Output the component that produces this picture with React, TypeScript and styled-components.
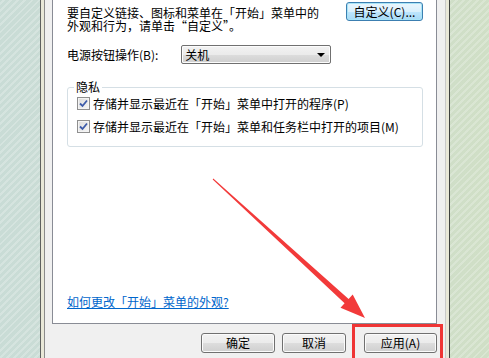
import styled, { createGlobalStyle } from "styled-components";

const GlobalStyle = createGlobalStyle`
  html, body {
    margin: 0;
    padding: 0;
  }
  body {
    width: 489px;
    height: 358px;
    overflow: hidden;
    font-family: "Noto Sans CJK SC", "DejaVu Sans", sans-serif;
    font-size: 12px;
    color: #000;
    background:
      repeating-linear-gradient(-45deg, rgba(255, 255, 255, 0.22) 0 2px, rgba(255, 255, 255, 0) 2px 5px),
      linear-gradient(90deg, #c9dcd6 0%, #cddcd2 50%, #d0dfc6 100%);
  }
`;

const Page = styled.div`
  position: relative;
  height: 358px;
  display: flex;
`;

const Window = styled.div`
  margin-left: 40px;
  width: 410px;
  box-sizing: border-box;
  border-left: 1px solid #5f6160;
  border-right: 1px solid #3f4140;
  padding: 0 4px 0 3px;
  background: #e9e8d8;
  display: flex;
`;

const Dialog = styled.div`
  flex: 1;
  border-left: 1px solid #8b8b8b;
  border-right: 1px solid #c9c9c9;
  background: #f0f0f0;
  padding: 0 8px 0 7px;
  display: flex;
  flex-direction: column;
`;

const TabPanel = styled.div`
  height: 324px;
  box-sizing: border-box;
  background: #fff;
  border: 1px solid #898c95;
  border-top: none;
  padding: 2px 13px 15px 14px;
  display: flex;
  flex-direction: column;
`;

const TopRow = styled.div`
  display: flex;
  justify-content: space-between;
  align-items: flex-start;
`;

const Description = styled.p`
  margin: 4px 0 0;
  line-height: 13px;
`;

const PushButton = styled.button<{ $width: number; $focused?: boolean }>`
  width: ${(p) => p.$width}px;
  height: ${(p) => (p.$focused ? 19 : 20)}px;
  padding: 0;
  font-family: inherit;
  font-size: 12px;
  line-height: 1;
  color: #000;
  border-radius: 3px;
  border: 1px solid ${(p) => (p.$focused ? "#3c7fb1" : "#707070")};
  box-shadow: inset 0 0 0 1px ${(p) => (p.$focused ? "#a8e4f7" : "#fbfbfb")};
  background: linear-gradient(
    #f2f2f2 0%,
    #ebebeb 50%,
    #dddddd 51%,
    #cfcfcf 100%
  );
  ${(p) =>
    p.$focused &&
    `background: linear-gradient(#eaf6fd 0%, #d9f0fc 50%, #bee6fd 51%, #a7d9f5 100%);`}
`;

const PowerRow = styled.div`
  display: flex;
  align-items: center;
  gap: 23px;
  margin-top: 13px;
`;

const Label = styled.span`
  line-height: 12px;
`;

const Select = styled.div`
  width: 150px;
  height: 19px;
  box-sizing: border-box;
  border: 1px solid #707070;
  border-radius: 2px;
  background: linear-gradient(#f2f2f2 0%, #ebebeb 50%, #dddddd 51%, #cfcfcf 100%);
  box-shadow: inset 0 0 0 1px #fcfcfc;
  display: flex;
  align-items: center;
  justify-content: space-between;
  padding: 0 5px 0 3px;
`;

const Caret = styled.span`
  width: 0;
  height: 0;
  border-left: 4px solid transparent;
  border-right: 4px solid transparent;
  border-top: 4px solid #000;
`;

const Group = styled.fieldset`
  margin: 17px 0 0 0;
  padding: 4px 0 13px 9px;
  border: 1px solid #d5dfe5;
  border-radius: 3px;
  display: flex;
  flex-direction: column;
  gap: 10px;
  width: 356px;
  box-sizing: border-box;
`;

const Legend = styled.legend`
  padding: 0 2px;
  margin-left: -3px;
  line-height: 12px;
`;

const CheckRow = styled.label`
  display: flex;
  align-items: center;
  gap: 3px;
  line-height: 13px;
`;

const Box = styled.span`
  width: 13px;
  height: 13px;
  box-sizing: border-box;
  border: 1px solid #8f8f8f;
  background: linear-gradient(135deg, #dcdcdc 0%, #f6f6f6 100%);
  box-shadow: inset 0 0 0 1px #f4f4f4;
  display: flex;
  align-items: center;
  justify-content: center;
`;

const Spacer = styled.div`
  flex: 1;
`;

const HelpLink = styled.a`
  color: #0066cc;
  text-decoration: underline;
  line-height: 12px;
  align-self: flex-start;
`;

const ButtonRow = styled.div`
  display: flex;
  align-items: flex-start;
  padding: 9px 0 0 149px;
`;

const Highlight = styled.div`
  position: absolute;
  left: 352px;
  top: 324px;
  width: 91px;
  height: 40px;
  box-sizing: border-box;
  border: 3px solid #ef3535;
  pointer-events: none;
`;

const ArrowLayer = styled.svg`
  position: absolute;
  left: 0;
  top: 0;
  pointer-events: none;
`;

const Check = () => (
  <svg width="9" height="9" viewBox="0 0 9 9">
    <path d="M1 4.5 L3.5 7 L8 1.5" fill="none" stroke="#3d5ba9" strokeWidth="1.8" />
  </svg>
);

export default function App() {
  return (
    <>
      <GlobalStyle />
      <Page>
        <Window>
          <Dialog>
            <TabPanel>
              <TopRow>
                <Description>
                  要自定义链接、图标和菜单在「开始」菜单中的
                  <br />
                  外观和行为，请单击“自定义”。
                </Description>
                <PushButton $width={77} $focused>
                  自定义(C)...
                </PushButton>
              </TopRow>
              <PowerRow>
                <Label>电源按钮操作(B):</Label>
                <Select>
                  <span>关机</span>
                  <Caret />
                </Select>
              </PowerRow>
              <Group>
                <Legend>隐私</Legend>
                <CheckRow>
                  <Box>
                    <Check />
                  </Box>
                  存储并显示最近在「开始」菜单中打开的程序(P)
                </CheckRow>
                <CheckRow>
                  <Box>
                    <Check />
                  </Box>
                  存储并显示最近在「开始」菜单和任务栏中打开的项目(M)
                </CheckRow>
              </Group>
              <Spacer />
              <HelpLink href="#">如何更改「开始」菜单的外观?</HelpLink>
            </TabPanel>
            <ButtonRow>
              <PushButton $width={74}>确定</PushButton>
              <PushButton $width={64} style={{ marginLeft: 7 }}>
                取消
              </PushButton>
              <PushButton $width={73} style={{ marginLeft: 18 }}>
                应用(A)
              </PushButton>
            </ButtonRow>
          </Dialog>
        </Window>
        <ArrowLayer width="489" height="358" viewBox="0 0 489 358">
          <polygon
            points="213.3,178.6 348.6,298.9 352.7,294.5 365,318 340.5,307.7 344.6,303.3 212.7,179.4"
            fill="#f23a3a"
          />
        </ArrowLayer>
        <Highlight />
      </Page>
    </>
  );
}
